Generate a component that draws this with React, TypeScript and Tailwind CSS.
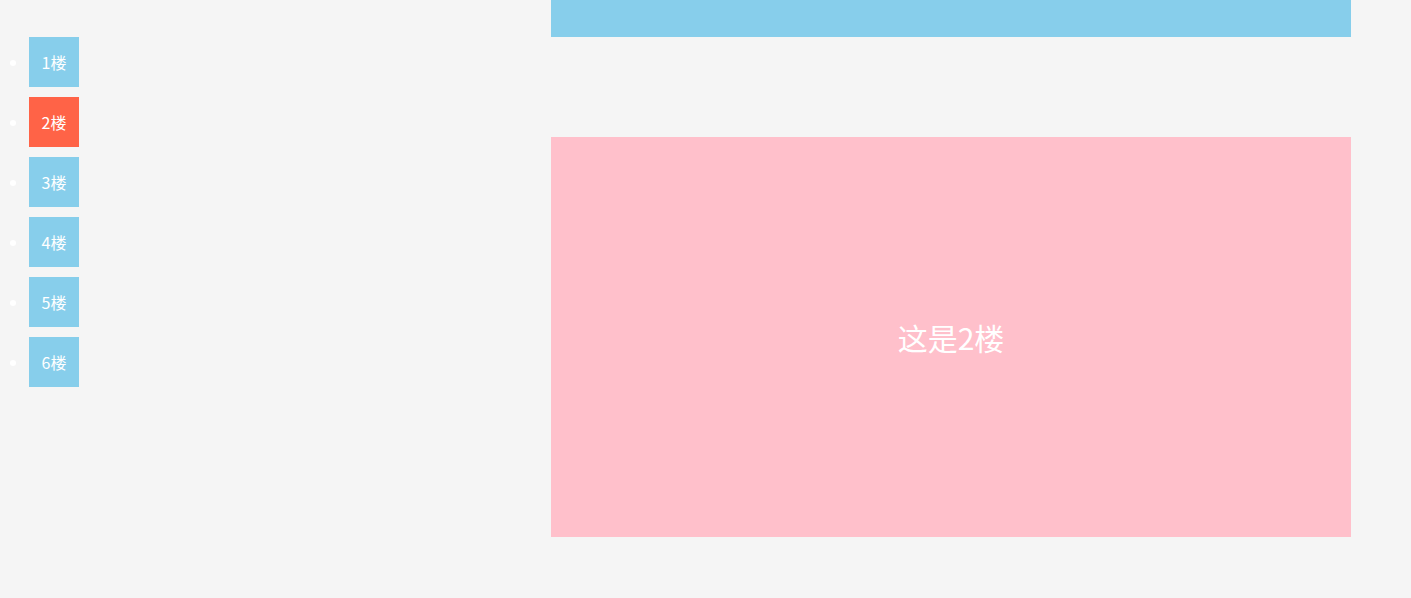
const floors = ["1楼", "2楼", "3楼", "4楼", "5楼", "6楼"];

export default function App() {
  const active = 1;

  return (
    <div className="h-[598px] overflow-hidden bg-[#f5f5f5] flex font-['Noto_Sans_CJK_SC',sans-serif] text-white">
      {/* floor nav */}
      <ul className="list-disc pl-[29px] pt-[27px] w-[551px] shrink-0 marker:text-white">
        {floors.map((f, i) => (
          <li
            key={f}
            className={`w-[50px] h-[50px] mt-[10px] leading-[50px] text-center text-[16px] ${
              i === active ? "bg-[#ff6347]" : "bg-[#87ceeb]"
            }`}
          >
            {f}
          </li>
        ))}
      </ul>

      {/* floors */}
      <div className="w-[800px] shrink-0">
        <div className="h-[37px] bg-[#87ceeb]" />
        <div className="mt-[100px] h-[400px] bg-[#ffc0cb] flex items-center justify-center text-[30px]">
          这是2楼
        </div>
      </div>
    </div>
  );
}
